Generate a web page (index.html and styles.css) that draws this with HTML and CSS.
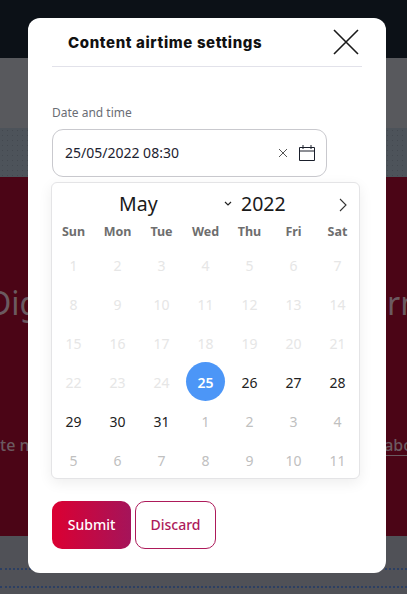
FILE: index.html
```html
<!DOCTYPE html>
<html lang="en">
<head>
<meta charset="utf-8">
<title>Content airtime settings</title>
<link rel="stylesheet" href="styles.css">
</head>
<body>
<div class="page">
  <div class="top-bar"></div>
  <div class="grey-band"></div>
  <div class="dots-band"></div>
  <div class="hero">
    <div class="hero-title"><span>Dig</span><span>rn</span></div>
    <div class="hero-sub"><span>te n</span><span class="hero-link">abo</span></div>
  </div>
  <div class="foot-band"><div class="dash"></div><div class="dash"></div></div>
</div>
<div class="modal">
  <div class="modal-head">
    <h1 class="modal-title">Content airtime settings</h1>
    <svg class="close-x" viewBox="0 0 26 26" width="26" height="26"><path d="M1 1L25 25M25 1L1 25" fill="none" stroke="#1a1a1a" stroke-width="1.6"/></svg>
  </div>
  <label class="field-label">Date and time</label>
  <div class="date-input">
    <span class="date-value">25/05/2022 08:30</span>
    <svg class="clear-x" viewBox="0 0 10 10" width="10" height="10"><path d="M1 1L9 9M9 1L1 9" fill="none" stroke="#555" stroke-width="1"/></svg>
    <svg class="cal-icon" viewBox="0 0 16 16" width="16" height="16"><path d="M.5 2.5h15v13H.5zM.5 6h15M4 0v4M12 0v4" fill="none" stroke="#1a1f2b" stroke-width="1"/></svg>
  </div>
  <div class="calendar">
    <div class="cal-head">
      <span class="cal-month">May</span>
      <svg class="cal-caret" viewBox="0 0 8 5" width="8" height="5"><path d="M1 1l3 3 3-3" fill="none" stroke="#222" stroke-width="1.2"/></svg>
      <span class="cal-year">2022</span>
      <svg class="cal-next" viewBox="0 0 8 14" width="8" height="14"><path d="M1 1l6 6-6 6" fill="none" stroke="#333" stroke-width="1.1"/></svg>
    </div>
    <div class="cal-grid weekdays">
      <span>Sun</span><span>Mon</span><span>Tue</span><span>Wed</span><span>Thu</span><span>Fri</span><span>Sat</span>
    </div>
    <div class="cal-grid days">
      <span class="off">1</span><span class="off">2</span><span class="off">3</span><span class="off">4</span><span class="off">5</span><span class="off">6</span><span class="off">7</span>
      <span class="off">8</span><span class="off">9</span><span class="off">10</span><span class="off">11</span><span class="off">12</span><span class="off">13</span><span class="off">14</span>
      <span class="off">15</span><span class="off">16</span><span class="off">17</span><span class="off">18</span><span class="off">19</span><span class="off">20</span><span class="off">21</span>
      <span class="off">22</span><span class="off">23</span><span class="off">24</span><span class="selected">25</span><span>26</span><span>27</span><span>28</span>
      <span>29</span><span>30</span><span>31</span><span class="next">1</span><span class="next">2</span><span class="next">3</span><span class="next">4</span>
      <span class="next">5</span><span class="next">6</span><span class="next">7</span><span class="next">8</span><span class="next">9</span><span class="next">10</span><span class="next">11</span>
    </div>
  </div>
  <div class="actions">
    <button class="btn btn-primary">Submit</button>
    <button class="btn btn-outline">Discard</button>
  </div>
</div>
</body>
</html>
```
FILE: styles.css
```css
* { box-sizing: border-box; }
html, body { margin: 0; height: 100%; overflow: hidden; }
body { font-family: "Noto Sans", "Open Sans", sans-serif; background: #505157; position: relative; width: 407px; height: 594px; }
.page { display: flex; flex-direction: column; height: 594px; overflow: hidden; }
.top-bar { height: 58px; flex: none; background: #0c1117; }
.grey-band { height: 70px; flex: none; background: #58595d; }
.dots-band { height: 49px; flex: none; background-color: #4d535a; background-image: radial-gradient(#43484f 0.7px, transparent 0.8px); background-size: 5px 5px; }
.hero { height: 359px; flex: none; background: #4b0516; color: #6b5a60; overflow: hidden; }
.hero-title { display: flex; justify-content: space-between; font-size: 32px; line-height: 40px; margin: 106px -13px 0 -12px; }
.hero-sub { display: flex; justify-content: space-between; font-size: 16px; font-weight: 500; line-height: 20px; margin: 112px -6px 0 0; }
.hero-link { border-bottom: 1px solid #6b5a60; }
.foot-band { flex: none; height: 58px; background: #505157; padding-top: 32px; }
.dash { height: 0; border-top: 2px dotted #2c3f63; margin-bottom: 16px; }

.modal { position: absolute; left: 28px; top: 18px; width: 358px; height: 555px; background: #fff; border-radius: 12px; padding: 0 24px; display: flex; flex-direction: column; }
.modal-head { height: 49px; border-bottom: 1px solid #e2e2ea; display: flex; align-items: center; justify-content: space-between; padding: 0 3px 0 16px; flex: none; }
.modal-title { margin: 0; font-family: "Inter", sans-serif; font-size: 15px; font-weight: 800; color: #111; letter-spacing: .62px; }
.close-x { flex: none; }
.field-label { font-size: 12px; line-height: 16px; color: #6a6d75; margin-top: 38px; }
.date-input { width: 275px; height: 48px; margin-top: 8px; border: 1px solid #c9c9ce; border-radius: 11px; display: flex; align-items: center; padding: 0 11px 0 12px; flex: none; }
.date-value { font-size: 14px; color: #1c2230; flex: 1; margin-top: -2px; }
.clear-x { margin-right: 11px; }
.calendar { width: 309px; height: 297px; margin-top: 5px; margin-left: -1px; border: 1px solid #e4e4e6; border-radius: 6px; background: #fff; box-shadow: 0 4px 14px rgba(0,0,0,.07); flex: none; position: relative; }
.cal-head { height: 34px; position: relative; font-size: 19.5px; color: #1a1a1a; }
.cal-month { position: absolute; left: 67px; top: 6px; line-height: 30px; }
.cal-caret { position: absolute; left: 172px; top: 18px; }
.cal-year { position: absolute; left: 189px; top: 6px; line-height: 30px; }
.cal-next { position: absolute; left: 287px; top: 15px; }
.cal-grid { display: grid; grid-template-columns: repeat(7, 44px); margin-left: -0.5px; justify-items: center; align-items: center; }
.weekdays { font-size: 12.5px; font-weight: 700; color: #6e6e6e; height: 22px; margin-top: 3px; }
.days { grid-auto-rows: 39px; font-size: 14px; color: #222; margin-top: 4px; }
.days span { width: 39px; height: 39px; display: flex; align-items: center; justify-content: center; border-radius: 50%; }
.days .off { color: #e6e6e6; }
.days .next { color: #c0c0c0; }
.days .selected { background: #4c96f7; color: #fff; font-weight: 600; margin-top: -3px; padding-top: 3px; }
.actions { display: flex; gap: 4px; margin-top: 22px; }
.btn { height: 48px; padding: 0 0 2px; border-radius: 10px; font-family: "Noto Sans", sans-serif; font-size: 14px; font-weight: 500; cursor: pointer; }
.btn-primary { width: 79px; border: 0; color: #fff; background: linear-gradient(90deg, #db0032, #a5145a); }
.btn-outline { width: 81px; background: #fff; border: 1px solid #ad1a5a; color: #ad1a5a; }
```
